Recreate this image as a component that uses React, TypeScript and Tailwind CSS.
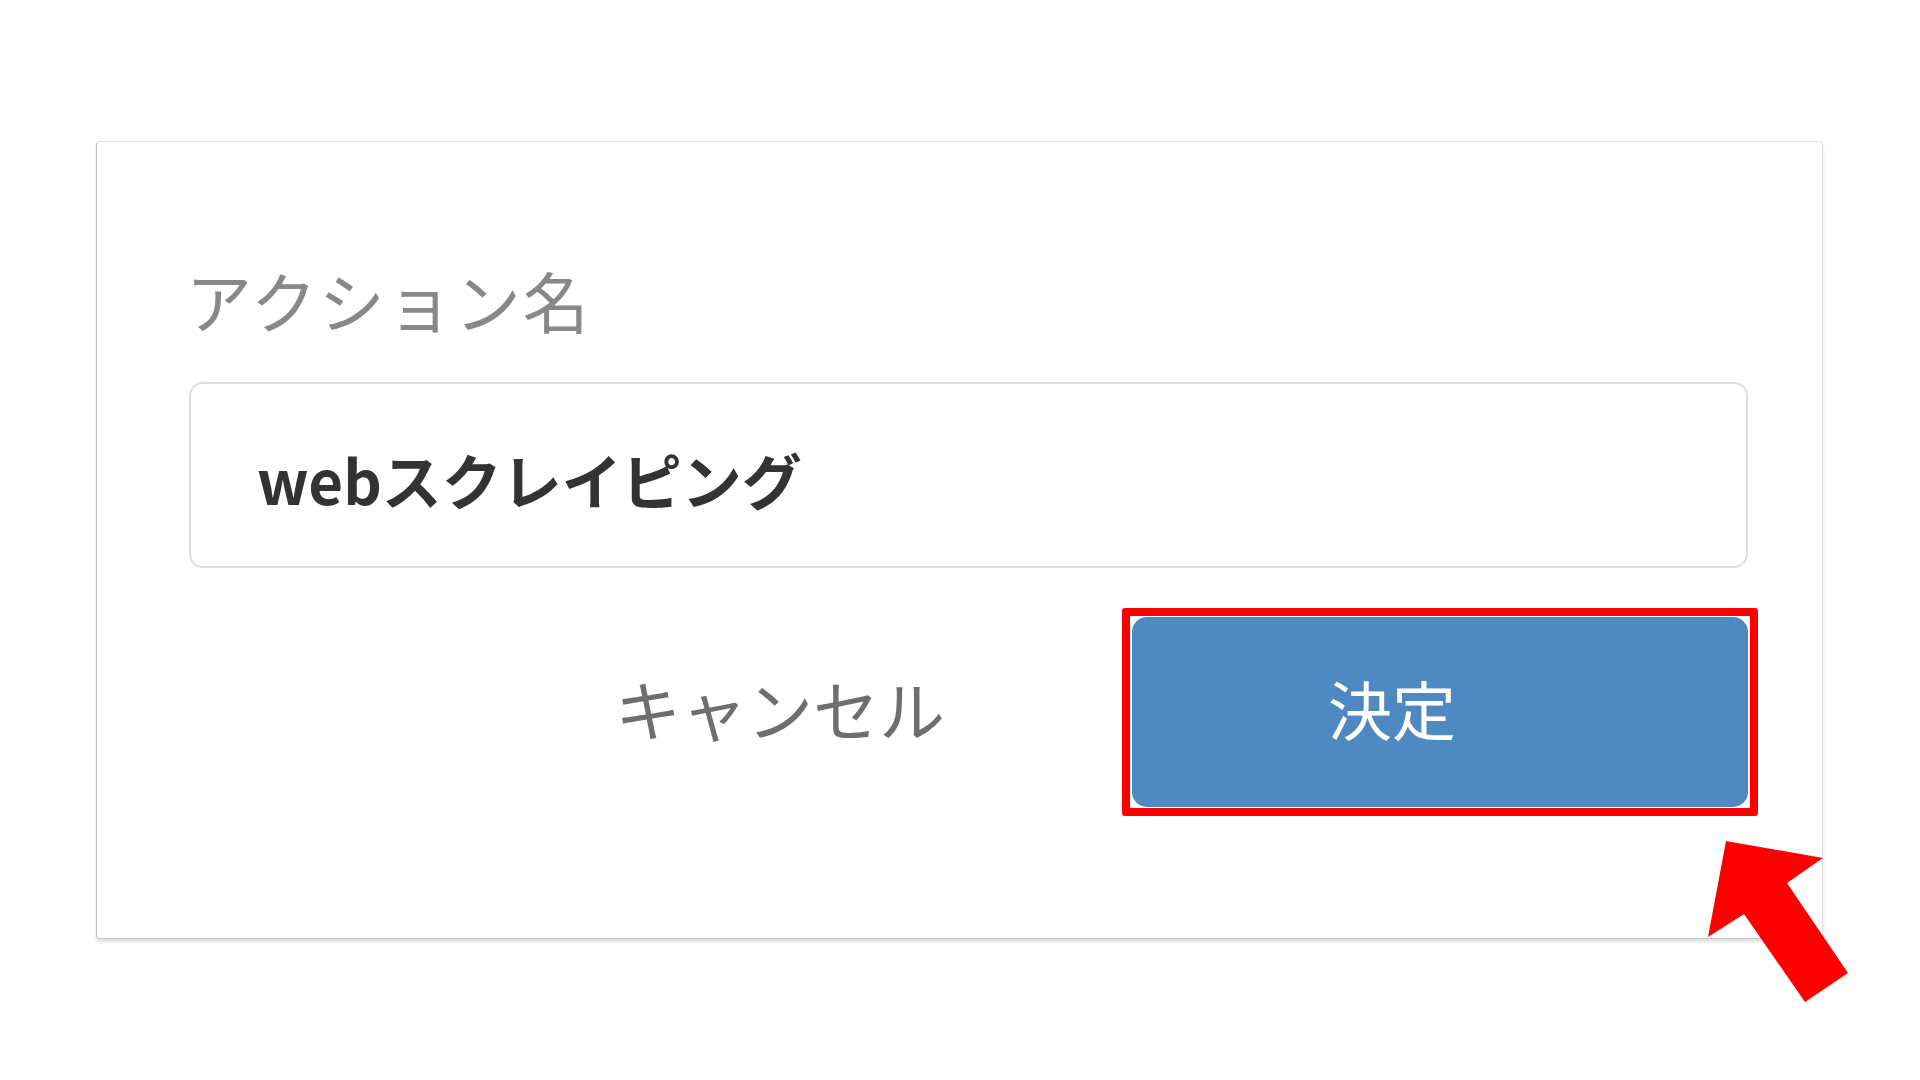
import React from 'react'

const font = { fontFamily: '"Noto Sans CJK JP", "Noto Sans", sans-serif' }

function ArrowMark() {
  // red pointer arrow drawn over the page, aiming at the confirm button
  return (
    <svg
      className="absolute left-[1700px] top-[830px] pointer-events-none"
      width="160"
      height="180"
      viewBox="0 0 160 180"
    >
      <polygon
        points="26,11 123,28 87,53 148,143 105,172 44,84 8,107"
        fill="#ff0000"
      />
    </svg>
  )
}

export default function App() {
  return (
    <div className="relative w-[1920px] h-[1080px] bg-white overflow-hidden" style={font}>
      <div className="pt-[141px] pl-[96px]">
        <div className="w-[1727px] h-[798px] bg-white border border-[#e0e0e0] border-l-[#c2c2c2] border-b-[#c8c8c8] rounded-[4px] shadow-[0_3px_3px_rgba(0,0,0,0.12)] pl-[92px] pr-[74px] pt-[124px]">
          {/* Label */}
          <div className="text-[66px] leading-[66px] text-[#888888] tracking-[2px] -ml-[3px]">アクション名</div>

          {/* Input */}
          <div className="mt-[50px] h-[186px] border-2 border-[#dedede] rounded-[14px] flex items-center pl-[66px] pt-[8px]">
            <span className="text-[60px] leading-[60px] font-bold text-[#333333]">webスクレイピング</span>
          </div>

          {/* Actions */}
          <div className="mt-[49px] flex items-center justify-end">
            <button className="w-[400px] h-[190px] text-[66px] leading-[66px] text-[#6e6e6e] bg-transparent pb-[10px]">
              キャンセル
            </button>
            <div className="relative ml-[152px]">
              <button className="w-[616px] h-[190px] rounded-[15px] bg-[#4f89c2] text-white text-[64px] leading-[64px] pr-[96px] pb-[10px]">
                決定
              </button>
              <div className="absolute -left-[10px] -right-[10px] -top-[9px] -bottom-[9px] border-[8px] border-[#ff0000] rounded-[3px] pointer-events-none" />
            </div>
          </div>
        </div>
      </div>
      <ArrowMark />
    </div>
  )
}
